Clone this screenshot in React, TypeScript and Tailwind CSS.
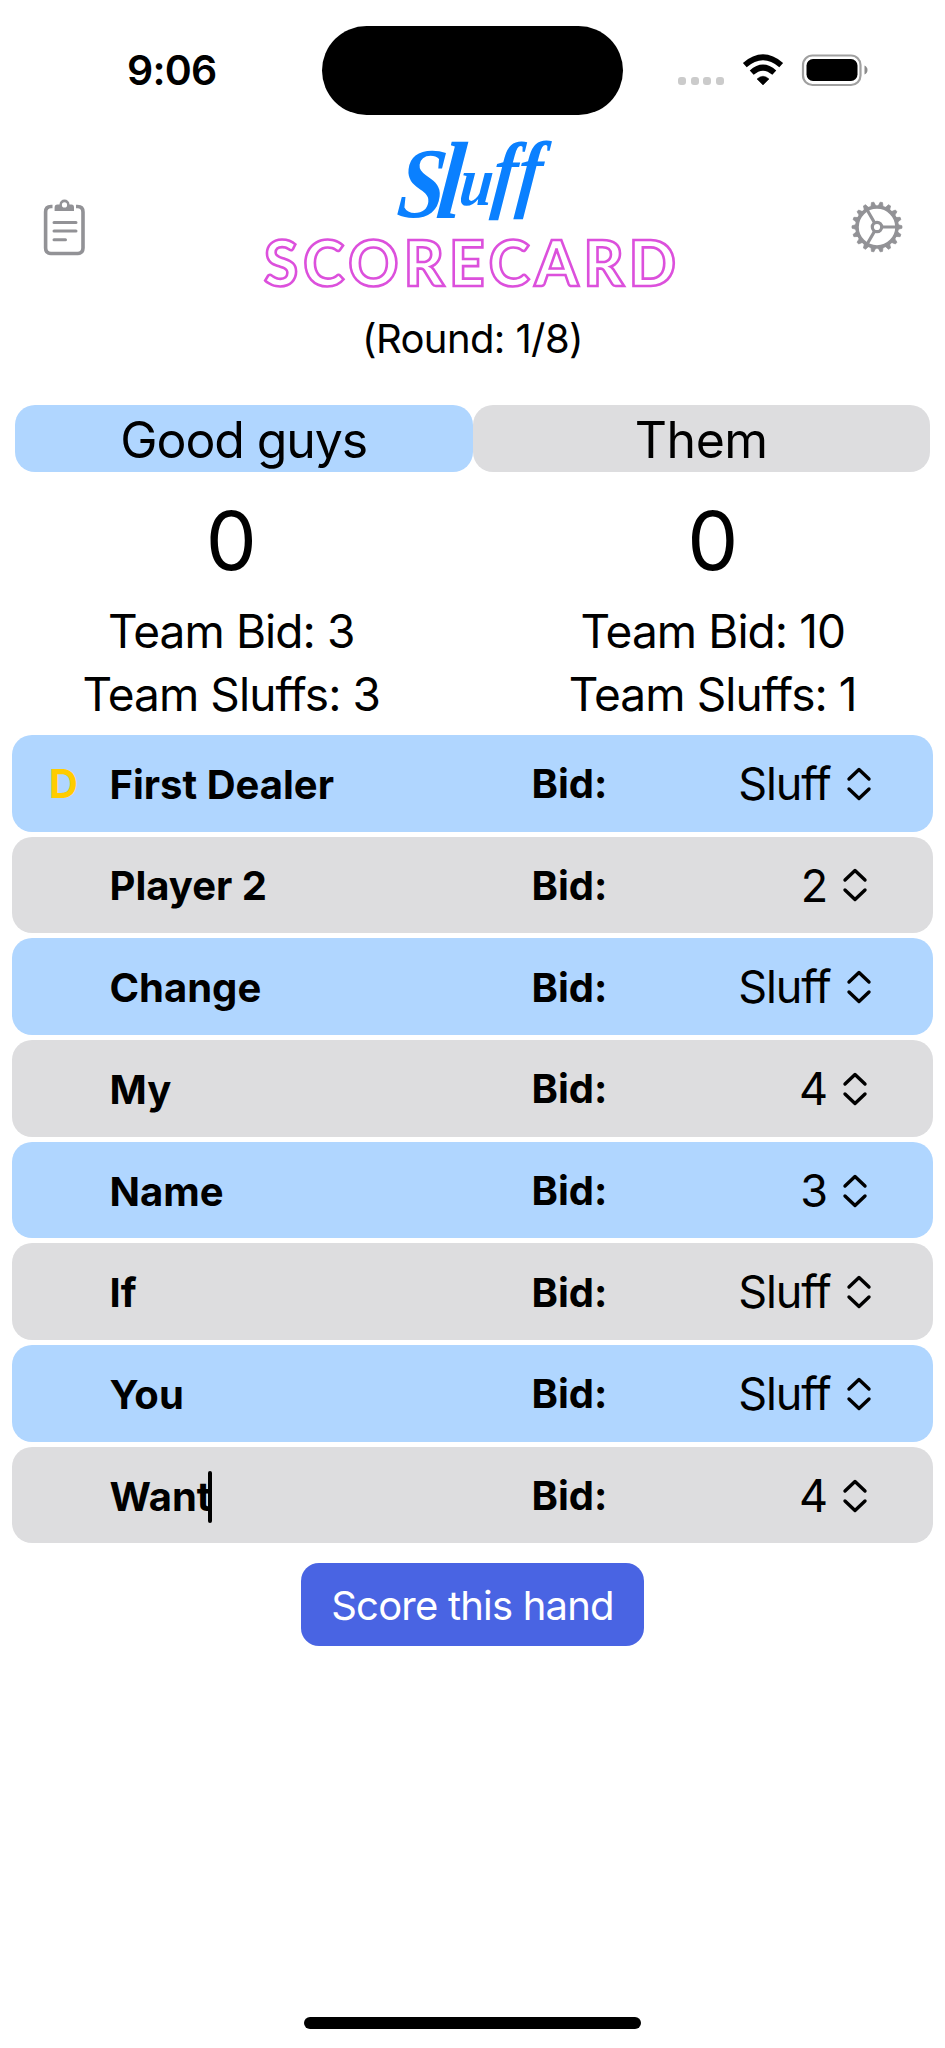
import React from "react";

type Player = { name: string; bid: string; dealer?: boolean; editing?: boolean };

const players: Player[] = [
  { name: "First Dealer", bid: "Sluff", dealer: true },
  { name: "Player 2", bid: "2" },
  { name: "Change", bid: "Sluff" },
  { name: "My", bid: "4" },
  { name: "Name", bid: "3" },
  { name: "If", bid: "Sluff" },
  { name: "You", bid: "Sluff" },
  { name: "Want", bid: "4", editing: true },
];

function StatusBar() {
  return (
    <div className="flex h-[115px] items-start pt-[26px]">
      <div className="mt-[24px] w-[322px] pl-[127px] text-[41px] leading-[40px] font-semibold tracking-[-0.02em]">9:06</div>
      <div className="h-[89px] w-[301px] rounded-full bg-black" />
      <div className="mt-[51px] ml-[55px] flex gap-[4.600px]">
        {[0, 1, 2, 3].map((i) => (
          <span key={i} className="size-[8px] rounded-[3px] bg-[#cbcbcb]" />
        ))}
      </div>
      <svg className="mt-[28px] ml-[18px]" width="42" height="32" viewBox="0 0 42 32">
        <path d="M21 31L15 25Q21 19.500 27 25Z" stroke="black" strokeWidth="0.500" />
        <path d="M9.700 18.700Q21 8.500 32.300 18.700" fill="none" stroke="black" strokeWidth="5.800" />
        <path d="M2.800 11.100Q21 -4.500 39.200 11.100" fill="none" stroke="black" strokeWidth="5.800" />
      </svg>
      <svg className="mt-[27px] ml-[17px]" width="68" height="34" viewBox="0 0 68 34">
        <rect x="2" y="2.500" width="57.500" height="29.500" rx="9.500" fill="none" stroke="#a0a0a0" strokeWidth="2.200" />
        <rect x="5.500" y="6" width="51" height="22" rx="6.500" />
        <path d="M63.500 12.500Q66.500 14 66.500 17Q66.500 20 63.500 21.500Z" fill="#8c8c8c" />
      </svg>
    </div>
  );
}

function ClipboardIcon() {
  return (
    <svg width="44" height="60" viewBox="0 0 44 60" fill="none" stroke="#929296">
      <path d="M10.500 7.500H9Q3.600 7.500 3.600 13V49Q3.600 54.500 9 54.500H35.500Q41 54.500 41 49V13Q41 7.500 35.500 7.500H34" strokeWidth="3.600" />
      <path d="M12.600 12V8.500Q12.600 5.500 15.500 5.500H17.500A5 5 0 0 1 27.500 5.500H29.500Q32 5.500 32 8.500V12Z M22.500 3.300A2.600 2.600 0 1 0 22.500 8.500A2.600 2.600 0 1 0 22.500 3.300Z" fill="#929296" fillRule="evenodd" stroke="none" />
      <path d="M12 23.500H34M12 32H34M12 40.700H23.500" strokeWidth="3" strokeLinecap="round" />
    </svg>
  );
}

function GearIcon() {
  const teeth = Array.from({ length: 18 }, (_, i) => i * 20);
  return (
    <svg width="52" height="52" viewBox="-26 -26 52 52" fill="none" stroke="#929296">
      <circle r="20" strokeWidth="3.600" />
      <circle r="4.700" strokeWidth="3.200" />
      {teeth.map((a) => (
        <path key={a} d="M20.500 -2.600L25 -1.200V1.200L20.500 2.600Z" fill="#929296" strokeWidth="0.700" strokeLinejoin="round" transform={`rotate(${a})`} />
      ))}
      <path d="M5.500 0H20M-2.750 -4.760L-10 -17.300M-2.750 4.760L-10 17.300" strokeWidth="3.200" />
    </svg>
  );
}

function Logo() {
  return (
    <svg className="overflow-visible" width="420" height="180" viewBox="0 0 420 180">
      <text transform="translate(130 87) skewX(-6) scale(0.85 1)" fontFamily="'Liberation Serif', serif" fontStyle="italic" fontWeight="700" fill="#0a80ff">
        <tspan x="3" y="0" fontSize="100">S</tspan>
        <tspan x="49" y="1" fontSize="110">l</tspan>
        <tspan x="75" y="-12" fontSize="70">u</tspan>
        <tspan x="113" y="-15" fontSize="86">f</tspan>
        <tspan x="142" y="-16" fontSize="86">f</tspan>
      </text>
      <text x="1" y="155.500" fontFamily="Lato, sans-serif" fontWeight="900" fontSize="62" textLength="412" fill="none" stroke="#dc50dc" strokeWidth="2.600">
        SCORECARD
      </text>
    </svg>
  );
}

function Header() {
  return (
    <header className="flex h-[185px] items-start justify-between pr-[42px] pl-[42px]">
      <div className="mt-[84px] w-[52px]"><ClipboardIcon /></div>
      <div className="mt-[15px]"><Logo /></div>
      <div className="mt-[86px]"><GearIcon /></div>
    </header>
  );
}

type TeamProps = { name: string; score: number; bid: number; sluffs: number; blue?: boolean };

function Team({ name, score, bid, sluffs, blue }: TeamProps) {
  return (
    <section className="flex w-[457.500px] flex-col items-center">
      <h2 className={`flex h-[67px] w-full items-center justify-center rounded-[20px] pt-[3px] text-[50px] ${blue ? "bg-[#b0d6ff] tracking-[-0.022em]" : "bg-[#dddddf] tracking-[-0.01em]"}`}>{name}</h2>
      <div className={`flex flex-col items-center ${blue ? "mr-[25px]" : "ml-[23px]"}`}>
        <p className="mt-[20px] text-[81px] leading-[98px]">{score}</p>
        <p className="mt-[10px] text-[46px] leading-[63px] tracking-[-0.02em]">Team Bid: {bid}</p>
        <p className="text-[46px] leading-[62px] tracking-[-0.02em]">Team Sluffs: {sluffs}</p>
      </div>
    </section>
  );
}

function Chevrons() {
  return (
    <svg width="26" height="36" viewBox="0 0 26 36" fill="none" stroke="black" strokeWidth="3.400" strokeLinecap="round" strokeLinejoin="round">
      <path d="M3 13L13 3.500L23 13M3 23L13 32.500L23 23" />
    </svg>
  );
}

function PlayerRow({ player, blue }: { player: Player; blue: boolean }) {
  return (
    <li className={`flex h-[96.500px] items-center rounded-[20px] text-[40px] font-bold ${blue ? "bg-[#b0d6ff]" : "bg-[#dddddf]"}`}>
      <span className="w-[97.500px] pt-[2px] pl-[37px] text-[#ffcc00]">{player.dealer ? "D" : ""}</span>
      <span className="flex w-[422px] items-center pt-[3px]">
        {player.name}
        {player.editing && <span className="-ml-[3px] h-[52px] w-[4px] rounded-full bg-black" />}
      </span>
      <span className="pt-[2px]">Bid:</span>
      <span className={`ml-auto flex items-center gap-[15px] pt-[1px] text-[45px] font-normal tracking-[-0.025em] ${player.bid === "Sluff" ? "pr-[61.500px]" : "pr-[65px]"}`}>
        {player.bid}
        <Chevrons />
      </span>
    </li>
  );
}

export default function App() {
  return (
    <main className="flex h-[2048px] w-[945px] flex-col overflow-hidden bg-white font-[Inter,sans-serif] text-black">
      <StatusBar />
      <Header />
      <p className="mt-[14px] h-[50px] text-center text-[40px] leading-[50px] tracking-[-0.015em]">(Round: 1/8)</p>
      <div className="mt-[41px] flex h-[330px] justify-center">
        <Team name="Good guys" score={0} bid={3} sluffs={3} blue />
        <Team name="Them" score={0} bid={10} sluffs={1} />
      </div>
      <ul className="mx-[12px] flex flex-col gap-[5.200px]">
        {players.map((p, i) => (
          <PlayerRow key={p.name} player={p} blue={i % 2 === 0} />
        ))}
      </ul>
      <button className="mt-[20px] h-[82.500px] w-[343px] self-center rounded-[18px] bg-[#4964e3] pt-[2px] text-[40px] font-normal tracking-[-0.02em] text-white">Score this hand</button>
      <div className="mt-auto mb-[19px] h-[12.500px] w-[337px] self-center rounded-full bg-black" />
    </main>
  );
}
